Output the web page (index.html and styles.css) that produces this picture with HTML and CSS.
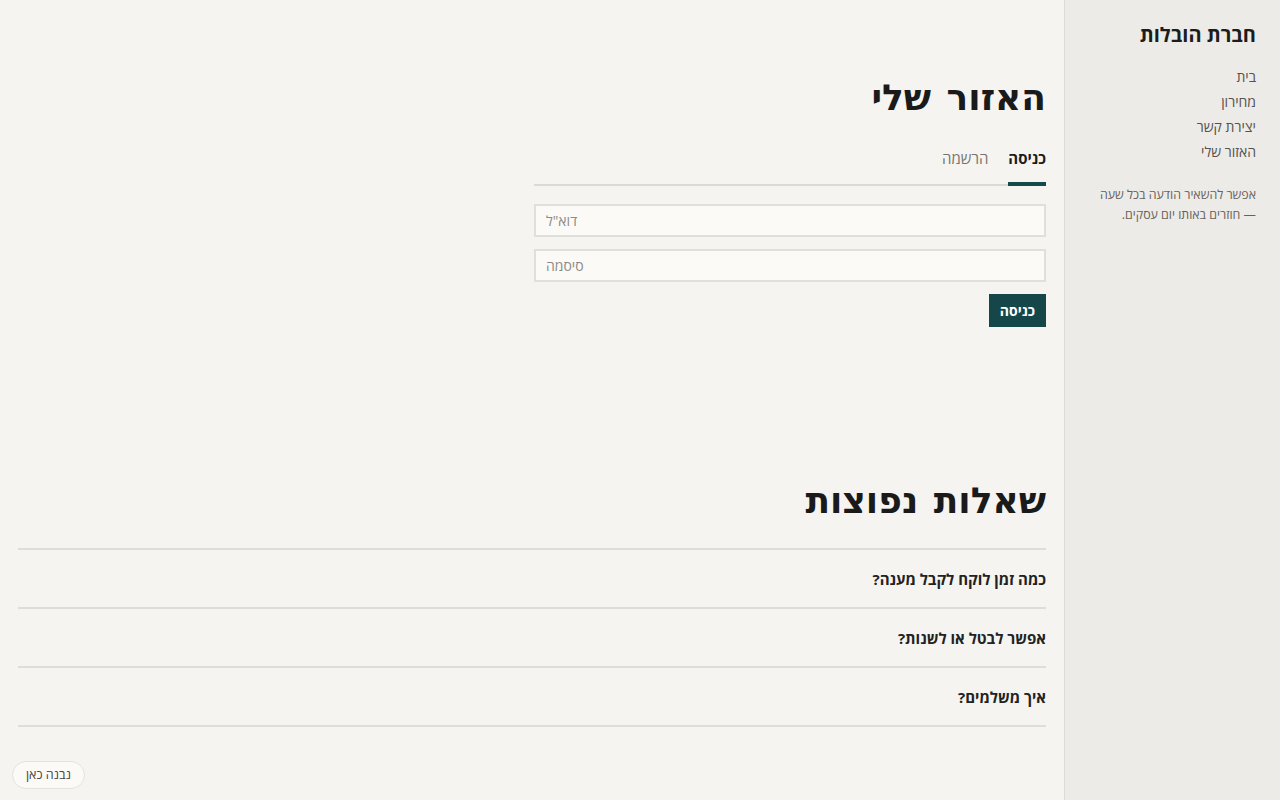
FILE: index.html
```html
<!DOCTYPE html>
<html lang="he" dir="rtl">
<head>
    <meta charset="UTF-8">
    <meta name="viewport" content="width=device-width, initial-scale=1.0">
    <title>האזור שלי — חברת הובלות</title>
    <link rel="stylesheet" href="styles.css">
</head>
<body>
    <div class="layout">
        <aside class="sidebar">
            <div class="brand">חברת הובלות</div>
            <nav class="side-nav">
                <a href="#">בית</a>
                <a href="#">מחירון</a>
                <a href="#">יצירת קשר</a>
                <a href="#">האזור שלי</a>
            </nav>
            <p class="side-note">אפשר להשאיר הודעה בכל שעה —&nbsp;חוזרים באותו יום עסקים.</p>
        </aside>

        <main class="main">
            <section class="account">
                <h1>האזור שלי</h1>
                <div class="tabs">
                    <button class="tab active">כניסה</button>
                    <button class="tab">הרשמה</button>
                </div>
                <form class="login-form">
                    <input type="email" placeholder="דוא&quot;ל">
                    <input type="password" placeholder="סיסמה">
                    <div class="form-actions">
                        <button type="submit" class="submit">כניסה</button>
                    </div>
                </form>
            </section>

            <section class="faq">
                <h2>שאלות נפוצות</h2>
                <div class="faq-list">
                    <div class="faq-item">כמה זמן לוקח לקבל מענה?</div>
                    <div class="faq-item">אפשר לבטל או לשנות?</div>
                    <div class="faq-item">איך משלמים?</div>
                </div>
            </section>
        </main>
    </div>

    <a class="built-badge" href="#">נבנה כאן</a>
</body>
</html>
```

FILE: styles.css
```css
* {
    box-sizing: border-box;
}
html, body {
    height: 100%;
}
body {
    margin: 0;
    font-family: "Open Sans", "DejaVu Sans", sans-serif;
    background-color: #f5f4f0;
    color: #1c1c1c;
}
.layout {
    display: flex;
    min-height: 100%;
}
.sidebar {
    width: 216px;
    flex-shrink: 0;
    background-color: #edebe7;
    border-left: 1px solid #dedcd7;
    padding: 20px 24px;
}
.brand {
    font-size: 20px;
    font-weight: 700;
    line-height: 30px;
    margin-bottom: 14px;
}
.side-nav {
    display: flex;
    flex-direction: column;
}
.side-nav a {
    color: #55534f;
    text-decoration: none;
    font-size: 14px;
    line-height: 25px;
}
.side-note {
    margin: 21px 0 0;
    font-size: 12.4px;
    line-height: 20px;
    color: #66635e;
}
.main {
    flex: 1;
    padding: 0 18px 60px;
}
.account {
    width: 512px;
    padding-top: 72px;
}
h1, h2 {
    margin: 0;
    font-family: "DejaVu Sans", sans-serif;
    font-weight: 700;
    font-size: 36px;
    line-height: 52px;
    word-spacing: 3px;
    color: #1a1a1a;
}
.tabs {
    display: flex;
    gap: 20px;
    margin-top: 24px;
    border-bottom: 2px solid #dcdad5;
}
.tab {
    background: none;
    border: none;
    font-family: inherit;
    font-size: 15px;
    padding: 0 0 14px;
    color: #77746f;
    margin-bottom: -2px;
    border-bottom: 4px solid transparent;
    cursor: pointer;
}
.tab.active {
    color: #1c1c1c;
    font-weight: 700;
    border-bottom-color: #17494b;
}
.login-form {
    display: flex;
    flex-direction: column;
    gap: 12px;
    margin-top: 18px;
}
.login-form input {
    height: 33px;
    width: 100%;
    padding: 0 10px;
    border: 2px solid #e1dfda;
    background-color: #fbfaf7;
    font-family: inherit;
    font-size: 14px;
    color: #333;
    text-align: left;
}
.login-form input::placeholder {
    color: #8d8a85;
}
.form-actions {
    display: flex;
}
.submit {
    height: 33px;
    padding: 0 11px;
    border: none;
    background-color: #15474a;
    color: #fff;
    font-family: inherit;
    font-size: 14px;
    font-weight: 700;
    cursor: pointer;
}
.faq {
    margin-top: 148px;
}
.faq h2 {
    margin-bottom: 21px;
}
.faq-list {
    border-bottom: 2px solid #dfddd8;
}
.faq-item {
    border-top: 2px solid #dfddd8;
    height: 59px;
    display: flex;
    align-items: center;
    font-size: 15px;
    font-weight: 700;
    color: #222;
}
.built-badge {
    position: fixed;
    left: 12px;
    bottom: 11px;
    padding: 4px 13px;
    border: 1px solid #e4e2dd;
    border-radius: 14px;
    background-color: #fbfaf7;
    color: #444;
    font-size: 12.5px;
    text-decoration: none;
    line-height: 18px;
}
```
